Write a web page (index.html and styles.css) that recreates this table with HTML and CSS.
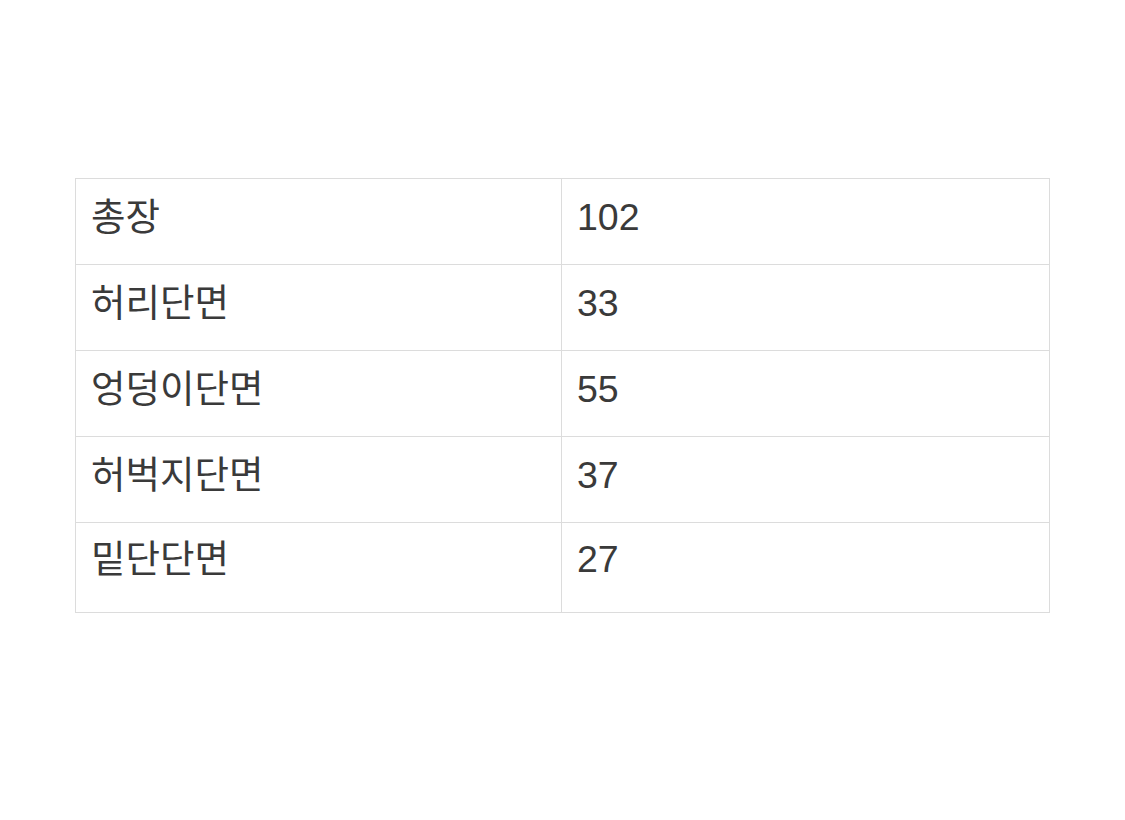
FILE: index.html
```html
<!DOCTYPE html>
<html lang="ko">
<head>
<meta charset="utf-8">
<link rel="stylesheet" href="styles.css">
</head>
<body>
<table class="size-table">
  <tr><td class="label">총장</td><td class="value">102</td></tr>
  <tr><td class="label">허리단면</td><td class="value">33</td></tr>
  <tr><td class="label">엉덩이단면</td><td class="value">55</td></tr>
  <tr><td class="label">허벅지단면</td><td class="value">37</td></tr>
  <tr class="last"><td class="label">밑단단면</td><td class="value">27</td></tr>
</table>
</body>
</html>
```
FILE: styles.css
```css
html, body {
  margin: 0;
  padding: 0;
  background: #fff;
}
body {
  padding: 178px 0 0 75px;
  font-family: "Liberation Sans", "Noto Sans CJK KR", sans-serif;
  color: #3a3a3a;
}
.size-table {
  width: 975px;
  border-collapse: collapse;
  table-layout: fixed;
}
.size-table td {
  border: 1px solid #dcdcdc;
  height: 86px;
  padding: 0 15px 8px;
  box-sizing: border-box;
  font-size: 37.5px;
  line-height: 1.2;
  vertical-align: middle;
}
.size-table .label {
  width: 486px;
}
.size-table .last td {
  height: 90px;
  padding-bottom: 16px;
}
```
